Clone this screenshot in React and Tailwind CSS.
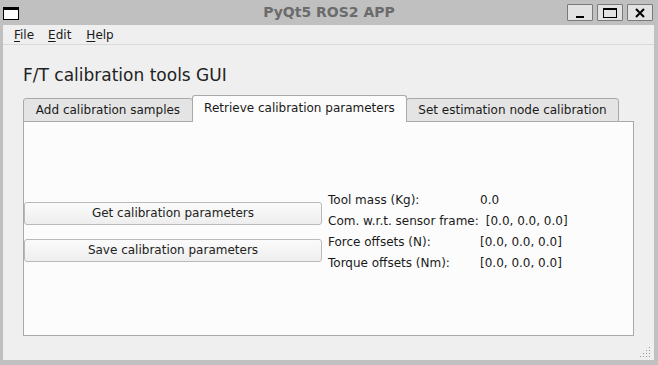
import React from 'react';

const rows = [
    { label: 'Tool mass (Kg):', value: '0.0' },
    { label: 'Com. w.r.t. sensor frame:', value: '[0.0, 0.0, 0.0]' },
    { label: 'Force offsets (N):', value: '[0.0, 0.0, 0.0]' },
    { label: 'Torque offsets (Nm):', value: '[0.0, 0.0, 0.0]' },
];

const WinButton = ({ children }) => (
    <div className="w-[26px] h-[17px] bg-[#e2e2e2] border border-[#7a7a7a] rounded-[1px] flex items-center justify-center">
        {children}
    </div>
);

const App = () => {
    return (
        <div className="w-[658px] h-[365px] bg-[#c0c0c0] flex flex-col font-['DejaVu_Sans',sans-serif] text-[#1a1a1a] overflow-hidden">
            {/* Barra de título */}
            <div className="h-[25px] relative flex items-center shrink-0">
                <div className="ml-[3px] mt-[1px] w-[16px] h-[13px] bg-white border border-black border-t-[3px]" />
                <div className="absolute inset-0 flex items-center justify-center text-[14px] font-bold text-[#6b6b6b] pb-[1px]">
                    PyQt5 ROS2 APP
                </div>
                <div className="ml-auto mr-[5px] flex gap-[4px]">
                    <WinButton>
                        <div className="w-[8px] h-[2px] bg-black mt-[8px]" />
                    </WinButton>
                    <WinButton>
                        <div className="w-[14px] h-[10px] border border-black border-t-2" />
                    </WinButton>
                    <WinButton>
                        <svg width="10" height="10" viewBox="0 0 10 10">
                            <path d="M1 1 L9 9 M9 1 L1 9" stroke="black" strokeWidth="2" />
                        </svg>
                    </WinButton>
                </div>
            </div>

            {/* Área de la ventana */}
            <div className="flex-1 ml-[3px] mr-[4px] mb-[5px] bg-[#efefef] flex flex-col relative">
                {/* Menú */}
                <div className="h-[20px] border-b border-[#d9d9d9] flex items-center text-[12px] pl-[11px] pt-[1px] shrink-0">
                    <span><span className="underline underline-offset-2">F</span>ile</span>
                    <span className="ml-[14px]"><span className="underline underline-offset-2">E</span>dit</span>
                    <span className="ml-[15px]"><span className="underline underline-offset-2">H</span>elp</span>
                </div>

                <div className="pl-[20px] pr-[20px] flex flex-col flex-1">
                    <div className="text-[17px] mt-[19px] leading-[22px] text-[#222]">F/T calibration tools GUI</div>

                    {/* Pestañas */}
                    <div className="mt-[9px] flex items-end h-[26px] relative z-10 text-[12px]">
                        <div className="w-[170px] h-[24px] bg-[#e4e4e4] border border-[#a9a9a9] rounded-t-[3px] flex items-center justify-center -mb-[1px]">
                            Add calibration samples
                        </div>
                        <div className="w-[215px] h-[27px] bg-[#fcfcfc] border border-b-0 border-[#a9a9a9] rounded-t-[3px] flex items-center justify-center -mb-[1px] -ml-[1px] pb-[2px]">
                            Retrieve calibration parameters
                        </div>
                        <div className="w-[213px] h-[24px] bg-[#e4e4e4] border border-[#a9a9a9] rounded-t-[3px] flex items-center justify-center -mb-[1px] -ml-[1px]">
                            Set estimation node calibration
                        </div>
                    </div>

                    {/* Panel */}
                    <div className="w-[611px] h-[215px] bg-[#fcfcfc] border border-[#a9a9a9] flex items-center pt-[6px] text-[12px]">
                        <div className="w-[298px] flex flex-col gap-[14px]">
                            <button className="h-[23px] bg-gradient-to-b from-[#fbfbfb] to-[#eeeeee] border border-[#b9b9b9] rounded-[3px] text-[12px] text-[#222]">
                                Get calibration parameters
                            </button>
                            <button className="h-[23px] bg-gradient-to-b from-[#fbfbfb] to-[#eeeeee] border border-[#b9b9b9] rounded-[3px] text-[12px] text-[#222]">
                                Save calibration parameters
                            </button>
                        </div>
                        <div className="ml-[6px] flex flex-col">
                            {rows.map((r) => (
                                <div key={r.label} className="h-[21px] flex items-center gap-[7px]">
                                    <span className="min-w-[145px]">{r.label}</span>
                                    <span>{r.value}</span>
                                </div>
                            ))}
                        </div>
                    </div>
                </div>

                {/* Agarre de redimensión */}
                <svg className="absolute right-[2px] bottom-[2px]" width="12" height="12" viewBox="0 0 12 12">
                    {[[10, 2], [10, 5], [7, 5], [10, 8], [7, 8], [4, 8], [10, 11], [7, 11], [4, 11], [1, 11]].map(([x, y]) => (
                        <rect key={`${x}-${y}`} x={x - 1} y={y - 1} width="1" height="1" fill="#9a9a9a" />
                    ))}
                </svg>
            </div>
        </div>
    );
};

export default App;
